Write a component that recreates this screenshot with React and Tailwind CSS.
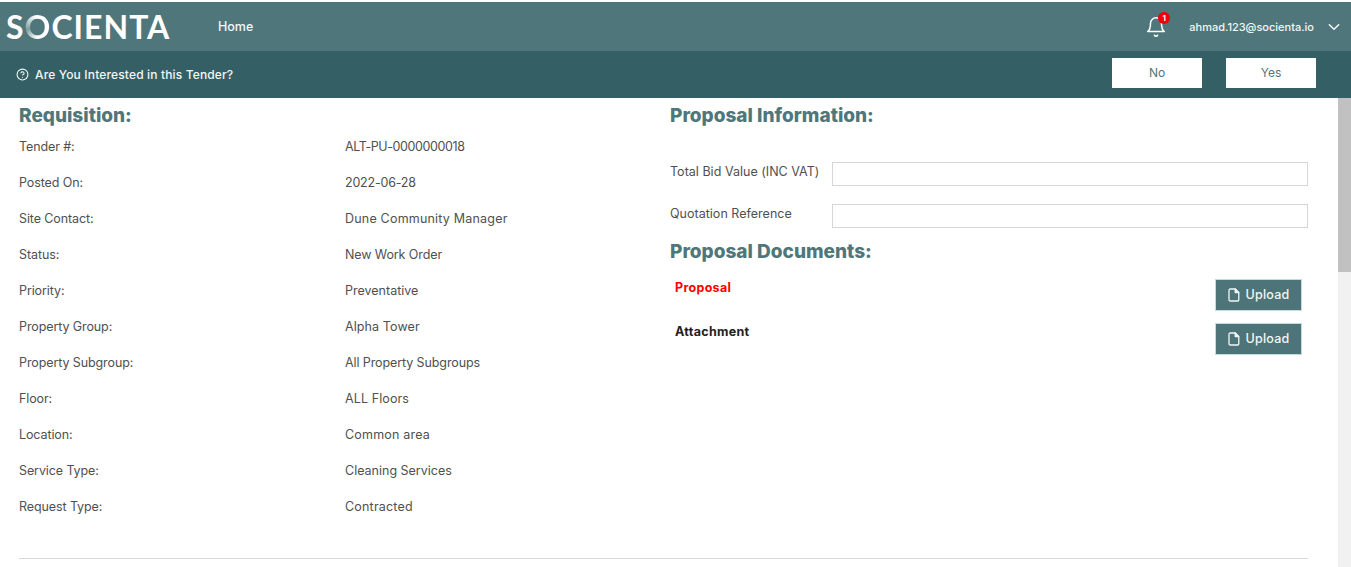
import React from "react";

const rows = [
  ["Tender #:", "ALT-PU-0000000018", "tracking-[-0.4px]"],
  ["Posted On:", "2022-06-28", "tracking-[-0.2px]"],
  ["Site Contact:", "Dune Community Manager", "tracking-[0.2px]"],
  ["Status:", "New Work Order", "tracking-[-0.1px]"],
  ["Priority:", "Preventative", "tracking-[0px]"],
  ["Property Group:", "Alpha Tower", "tracking-[0.1px]"],
  ["Property Subgroup:", "All Property Subgroups", "tracking-[-0.1px]"],
  ["Floor:", "ALL Floors", "tracking-[0.1px]"],
  ["Location:", "Common area", "tracking-[0.2px]"],
  ["Service Type:", "Cleaning Services", "tracking-[0px]"],
  ["Request Type:", "Contracted", "tracking-[0.2px]"],
];

function FileIcon() {
  return (
    <svg width="12" height="14" viewBox="0 0 12 14" fill="none" stroke="#f2f7f7" strokeWidth="1.3" strokeLinejoin="round">
      <path d="M2.2 1H7.2L10.8 4.6V11.8C10.8 12.5 10.3 13 9.6 13H2.2C1.5 13 1 12.5 1 11.8V2.2C1 1.5 1.5 1 2.2 1Z" />
      <path d="M7.2 1V4.6H10.8Z" fill="#f2f7f7" />
    </svg>
  );
}

function UploadRow({ label, color }) {
  return (
    <div className="flex h-[44px] items-start justify-between pl-[5px] pr-[6px]">
      <span className={`mt-[3px] text-[12.5px] leading-[16px] font-bold tracking-[0.3px] ${color}`}>{label}</span>
      <button className="mt-[2px] flex h-[32px] w-[87px] items-center justify-center gap-[6px] border border-[#c5dade] bg-[#4d7478] text-[12.5px] font-medium tracking-[0.2px] text-[#f2f7f7]">
        <FileIcon />
        Upload
      </button>
    </div>
  );
}

export default function App() {
  return (
    <div className="flex h-[567px] flex-col overflow-hidden bg-white pt-[2px] font-['Inter','Noto_Sans',sans-serif]">
      <header className="flex h-[49px] shrink-0 items-center bg-[#4f767b] pl-[6px] pr-[10px]">
        <div className="flex h-[34px] w-[164px] items-center font-['Lato',sans-serif] text-[32px] leading-[34px] font-bold tracking-[1px] text-white">
          <span>S</span>
          <span className="bg-[conic-gradient(from_60deg,#ffffff_0%,#ffffff_35%,#7f9da0_55%,#ffffff_80%)] bg-clip-text text-transparent">O</span>
          <span>CIENTA</span>
        </div>
        <nav className="ml-[48px] mt-[1px] text-[12.5px] font-medium text-[#f2f7f7]">Home</nav>
        <div className="ml-auto flex items-center">
          <div className="relative mr-[22px] mt-[1px] h-[22px] w-[22px]">
            <svg width="22" height="22" viewBox="0 0 24 24" fill="none" stroke="white" strokeWidth="1.7" strokeLinecap="round" strokeLinejoin="round">
              <path d="M6 8a6 6 0 0 1 12 0c0 7 3 9 3 9H3s3-2 3-9" />
              <path d="M10.3 21a1.94 1.94 0 0 0 3.4 0" />
            </svg>
            <span className="absolute -top-[4px] left-[13px] flex h-[12px] w-[12px] items-center justify-center rounded-full bg-[#f00000] text-[8px] font-bold text-white">1</span>
          </div>
          <span className="mt-[1px] text-[11px] font-medium text-[#f2f7f7]">ahmad.123@socienta.io</span>
          <svg width="14" height="14" viewBox="0 0 24 24" fill="none" stroke="#f2f7f7" strokeWidth="2.6" strokeLinecap="round" strokeLinejoin="round" className="ml-[13px]">
            <path d="M4 8l8 8 8-8" />
          </svg>
        </div>
      </header>

      <div className="flex h-[47px] shrink-0 items-center bg-[#346065] pl-[16px] pr-[35px]">
        <svg width="13" height="13" viewBox="0 0 24 24" fill="none" stroke="#f2f7f7" strokeWidth="2" strokeLinecap="round" strokeLinejoin="round">
          <circle cx="12" cy="12" r="10" />
          <path d="M9.1 9a3 3 0 0 1 5.8 1c0 2-3 3-3 3" />
          <path d="M12 17h.01" />
        </svg>
        <span className="ml-[6px] text-[12px] font-medium tracking-[0.15px] text-[#f2f7f7]">Are You Interested in this Tender?</span>
        <div className="ml-auto flex gap-[24px] pb-[3px]">
          <button className="h-[30px] w-[90px] bg-white text-[12px] text-[#4f767b]">No</button>
          <button className="h-[30px] w-[90px] bg-white text-[12px] text-[#4f767b]">Yes</button>
        </div>
      </div>

      <div className="flex min-h-0 flex-1">
        <main className="min-w-0 flex-1 pl-[19px] pr-[30px]">
          <div className="flex h-[460px]">
            <section className="w-[651px] shrink-0">
              <h2 className="mt-[6px] h-[24px] text-[19px] leading-[24px] font-extrabold text-[#4f767b]">Requisition:</h2>
              <div className="mt-[1px]">
                {rows.map(([k, v, t]) => (
                  <div key={k} className="flex h-[36px] items-center text-[12.5px] text-[#505050]">
                    <span className="w-[326px] shrink-0 tracking-[-0.1px]">{k}</span>
                    <span className={t}>{v}</span>
                  </div>
                ))}
              </div>
            </section>
            <section className="min-w-0 flex-1">
              <h2 className="mt-[6px] h-[24px] text-[19px] leading-[24px] font-extrabold text-[#4f767b]">Proposal Information:</h2>
              <div className="mt-[34px] flex h-[24px] items-center">
                <span className="w-[162px] shrink-0 pb-[3px] text-[12.5px] tracking-[0.02px] text-[#505050]">Total Bid Value (INC VAT)</span>
                <input className="h-[24px] flex-1 border border-[#d6d6d6] bg-white" />
              </div>
              <div className="mt-[18px] flex h-[24px] items-center">
                <span className="w-[162px] shrink-0 pb-[3px] text-[12.5px] tracking-[0.02px] text-[#505050]">Quotation Reference</span>
                <input className="h-[24px] flex-1 border border-[#d6d6d6] bg-white" />
              </div>
              <h2 className="mt-[12px] h-[24px] text-[19px] leading-[24px] font-extrabold text-[#4f767b]">Proposal Documents:</h2>
              <div className="mt-[13px]">
                <UploadRow label="Proposal" color="text-[#ff0000]" />
                <UploadRow label="Attachment" color="text-[#222]" />
              </div>
            </section>
          </div>
          <hr className="border-t border-[#d9d9d9]" />
        </main>
        <div className="w-[13px] shrink-0 bg-[#f1f1f1]">
          <div className="h-[174px] bg-[#c1c1c1]" />
        </div>
      </div>
    </div>
  );
}
